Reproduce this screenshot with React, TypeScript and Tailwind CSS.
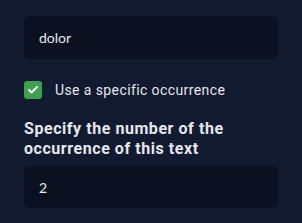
import React, { useState } from 'react';
import { Check } from 'lucide-react';

const App: React.FC = () => {
  const [text, setText] = useState('dolor');
  const [useOccurrence, setUseOccurrence] = useState(true);
  const [occurrence, setOccurrence] = useState('2');

  return (
    <div className="min-h-screen w-full bg-[#121a30] px-6 pt-4 font-['Roboto',sans-serif] tracking-wide">
      {/* Text to search for */}
      <input
        value={text}
        onChange={(e) => setText(e.target.value)}
        className="block h-[43px] w-full rounded-md bg-[#0b1120] px-[15px] font-['Lato',sans-serif] text-sm tracking-normal text-[#e5e7eb] outline-none"
      />

      {/* Occurrence toggle */}
      <label className="mt-[21px] flex cursor-pointer items-center gap-[13px]">
        <button
          type="button"
          onClick={() => setUseOccurrence(!useOccurrence)}
          className={`flex h-[18px] w-[18px] items-center justify-center rounded-[3px] ${
            useOccurrence ? 'bg-[#3ba14c]' : 'border border-gray-500 bg-transparent'
          }`}
        >
          {useOccurrence && <Check size={12} strokeWidth={4} className="text-white" />}
        </button>
        <span className="text-sm text-[#e5e7eb]">Use a specific occurrence</span>
      </label>

      {useOccurrence && (
        <>
          <p className="mt-[19px] text-base font-bold leading-5 tracking-[0.55px] text-[#e5e7eb]">
            Specify the number of the occurrence of this text
          </p>
          <input
            value={occurrence}
            onChange={(e) => setOccurrence(e.target.value)}
            className="mt-[7px] block h-[42px] w-full rounded-md bg-[#0b1120] px-[15px] font-['Lato',sans-serif] text-sm tracking-normal text-[#e5e7eb] outline-none"
          />
        </>
      )}
    </div>
  );
};

export default App;
